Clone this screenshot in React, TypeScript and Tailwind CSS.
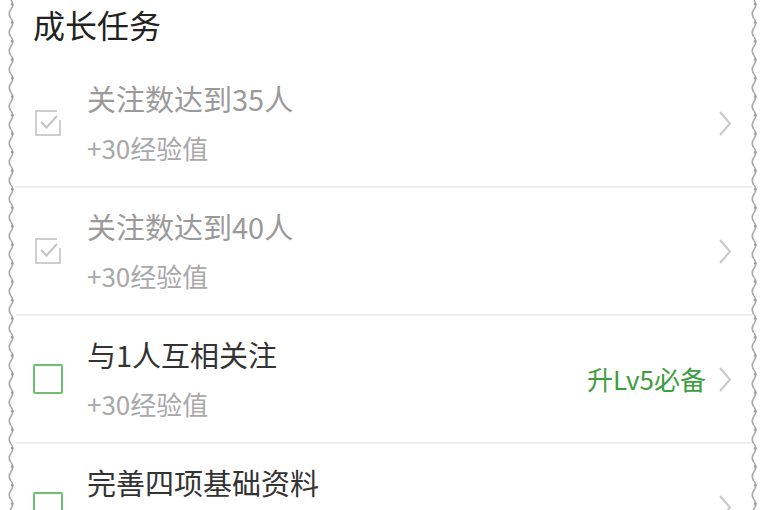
import React from 'react';

const tasks = [
  { title: '关注数达到35人', reward: '+30经验值', done: true },
  { title: '关注数达到40人', reward: '+30经验值', done: true },
  { title: '与1人互相关注', reward: '+30经验值', done: false, tag: '升Lv5必备' },
  { title: '完善四项基础资料', reward: '+30经验值', done: false },
];

function WavyEdge({ side }: { side: 'left' | 'right' }) {
  const id = `wave-${side}`;
  return (
    <svg
      className={`absolute top-0 h-full w-[10px] ${side === 'left' ? 'left-[6px]' : 'right-[9px]'}`}
      aria-hidden
    >
      <defs>
        <pattern id={id} width="10" height="18.5" patternUnits="userSpaceOnUse">
          <path d="M5 0 Q8.5 4.6 5 9.25 Q1.5 13.9 5 18.5" fill="none" stroke="#a8a8a8" strokeWidth="1.6" />
          <circle cx="6.2" cy="4.2" r="1.3" fill="#999" />
        </pattern>
      </defs>
      <rect width="10" height="100%" fill={`url(#${id})`} />
    </svg>
  );
}

function CheckBox({ done }: { done: boolean }) {
  if (done) {
    return (
      <svg width="30" height="30" viewBox="0 0 30 30" className="shrink-0">
        <path d="M24 3 H3 V27 H27 V12" fill="none" stroke="#cfcfcf" strokeWidth="2" />
        <path d="M8 14 L13.5 19.5 L24 8" fill="none" stroke="#c4c4c4" strokeWidth="2" />
      </svg>
    );
  }
  return <div className="h-[30px] w-[30px] shrink-0 rounded-[2px] border-2 border-[#6fbf73]" />;
}

function Chevron() {
  return (
    <svg width="14" height="27" viewBox="0 0 14 27" className="shrink-0">
      <polyline points="2,2 12,13.5 2,25" fill="none" stroke="#c9c9c9" strokeWidth="2" />
    </svg>
  );
}

export default function App() {
  return (
    <div className="relative h-[510px] w-[768px] overflow-hidden bg-white font-['Noto_Sans_CJK_SC','Noto_Sans',sans-serif]">
      <WavyEdge side="left" />
      <WavyEdge side="right" />

      <div className="mx-[16px]">
        <div className="flex h-[60px] items-start pl-[17px]">
          <span className="text-[32px] leading-[48px] text-[#222]">成长任务</span>
        </div>

        {tasks.map((task, i) => (
          <div
            key={i}
            className="flex h-[128px] items-center border-b-2 border-[#efefef] pl-[17px] pr-[20px]"
          >
            <CheckBox done={task.done} />
            <div className="ml-[24px] flex flex-1 flex-col gap-[10px]">
              <span className={`text-[29px] leading-[40px] ${task.done ? 'text-[#9a9a9a]' : 'text-[#333]'}`}>
                {task.title}
              </span>
              <span className="text-[26px] leading-[40px] text-[#a8a8a8]">{task.reward}</span>
            </div>
            {task.tag && (
              <span className="mr-[12px] text-[26px] leading-[40px] text-[#3d9e40]">{task.tag}</span>
            )}
            <Chevron />
          </div>
        ))}
      </div>
    </div>
  );
}
